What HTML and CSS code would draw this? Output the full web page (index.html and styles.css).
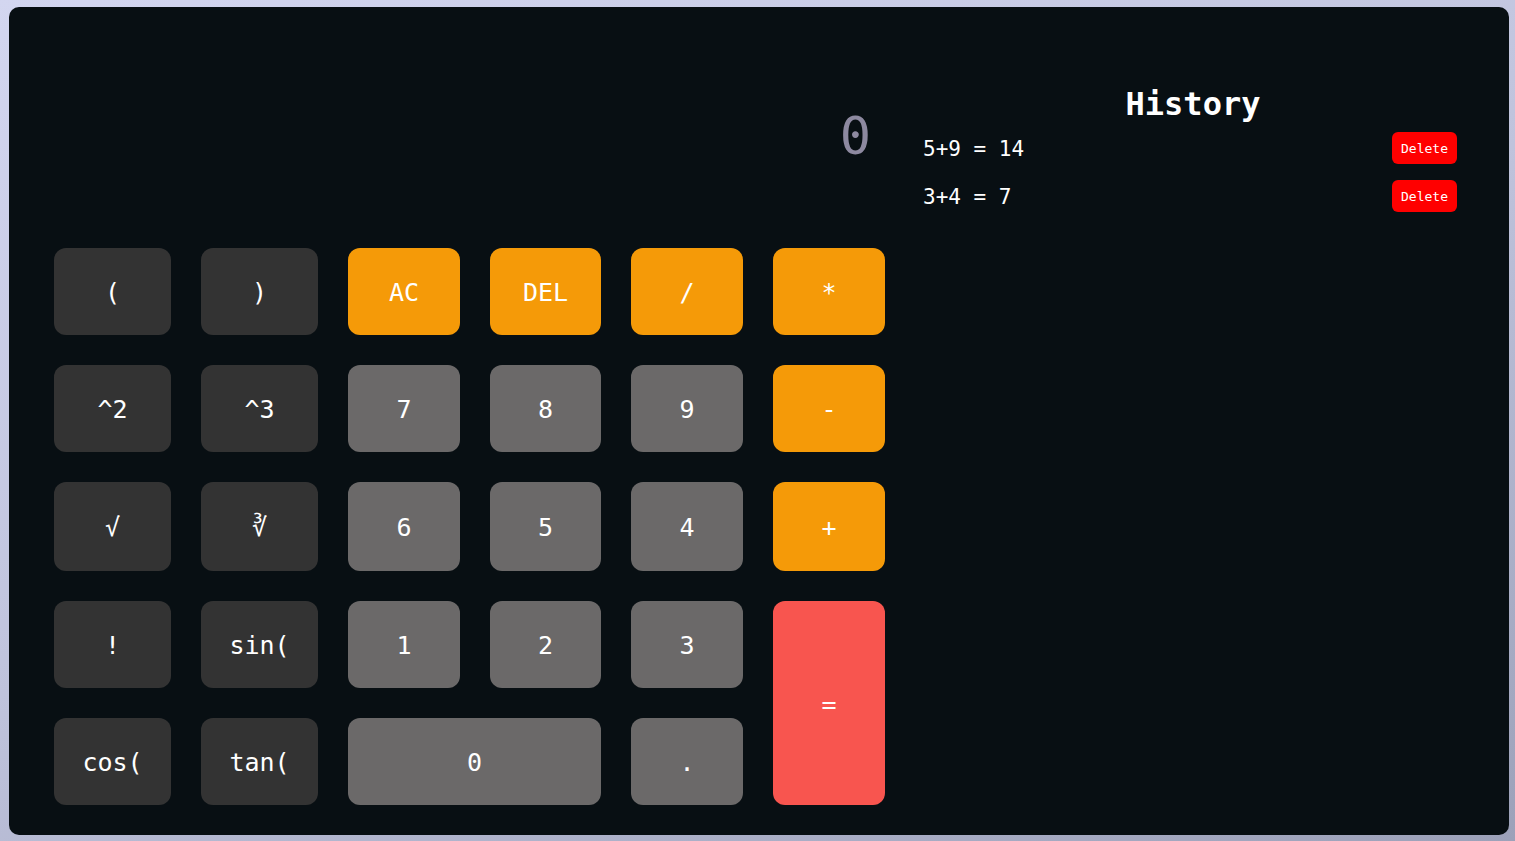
FILE: index.html
```html
<!DOCTYPE html>
<html lang="en">
<head>
<meta charset="utf-8">
<title>Calculator</title>
<link rel="stylesheet" href="styles.css">
</head>
<body>
<main class="app">
  <section class="calc">
    <div class="display"><span class="display-value">0</span></div>
    <div class="keys">
      <button class="key fn">(</button>
      <button class="key fn">)</button>
      <button class="key op">AC</button>
      <button class="key op">DEL</button>
      <button class="key op">/</button>
      <button class="key op">*</button>

      <button class="key fn">^2</button>
      <button class="key fn">^3</button>
      <button class="key num">7</button>
      <button class="key num">8</button>
      <button class="key num">9</button>
      <button class="key op">-</button>

      <button class="key fn">&#8730;</button>
      <button class="key fn">&#8731;</button>
      <button class="key num">6</button>
      <button class="key num">5</button>
      <button class="key num">4</button>
      <button class="key op">+</button>

      <button class="key fn">!</button>
      <button class="key fn">sin(</button>
      <button class="key num">1</button>
      <button class="key num">2</button>
      <button class="key num">3</button>
      <button class="key eq">=</button>

      <button class="key fn">cos(</button>
      <button class="key fn">tan(</button>
      <button class="key num zero">0</button>
      <button class="key num">.</button>
    </div>
  </section>
  <section class="history">
    <h2 class="history-title">History</h2>
    <div class="entry">
      <span class="entry-text">5+9 = 14</span>
      <button class="delete">Delete</button>
    </div>
    <div class="entry">
      <span class="entry-text">3+4 = 7</span>
      <button class="delete">Delete</button>
    </div>
  </section>
</main>
</body>
</html>
```
FILE: styles.css
```css
* { box-sizing: border-box; }

html, body { height: 100%; }

body {
  margin: 0;
  padding: 7px 6px 6px 9px;
  background: linear-gradient(160deg, #d3d6f0 0%, #bfc3dc 50%, #9ca1b9 100%);
  font-family: "DejaVu Sans Mono", "Liberation Mono", monospace;
}

.app {
  display: flex;
  width: 1500px;
  height: 828px;
  background: #080f13;
  border-radius: 10px;
  padding: 0 38px 30px 45px;
}

.calc {
  display: flex;
  flex-direction: column;
  gap: 30px;
  width: 831px;
}

.display {
  height: 211px;
  padding: 47px 14px 0 0;
  display: flex;
  justify-content: flex-end;
  align-items: center;
}

.display-value {
  font-size: 52px;
  color: #8d89a0;
  font-variant-numeric: slashed-zero;
}

.keys {
  display: grid;
  grid-template-columns: 117px 117px 112px 111px 112px 112px;
  grid-template-rows: 87px 87px 89px 87px 87px;
  gap: 30px;
}

.key {
  border: none;
  border-radius: 12px;
  color: #ffffff;
  font-family: "DejaVu Sans Mono", "DejaVu Sans", monospace;
  font-size: 25px;
  font-variant-numeric: slashed-zero;
  padding: 2px 0 0;
  cursor: pointer;
}

.fn { background: #333333; }
.num { background: #6b6969; }
.op { background: #f59a08; }
.eq {
  background: #f8554f;
  grid-row: span 2;
}
.zero { grid-column: span 2; }

.history {
  margin-left: 30px;
  width: 556px;
  padding-top: 79px;
  color: #ffffff;
}

.history-title {
  margin: 0 0 9px;
  text-align: center;
  font-size: 32px;
  font-weight: bold;
  line-height: 37px;
}

.entry {
  display: flex;
  justify-content: space-between;
  align-items: center;
  height: 32px;
  padding: 0 14px 0 8px;
  margin-bottom: 16px;
}

.entry-text {
  font-size: 21px;
  padding-top: 2px;
}

.delete {
  width: 65px;
  height: 32px;
  border: none;
  border-radius: 6px;
  background: #ff0000;
  color: #ffffff;
  font-family: "DejaVu Sans Mono", monospace;
  font-size: 13px;
  padding: 0;
}
```
